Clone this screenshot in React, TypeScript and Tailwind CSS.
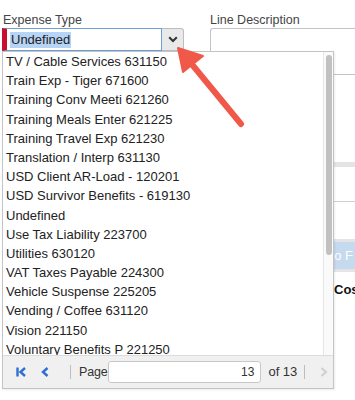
import React from 'react';

const items = [
  'TV / Cable Services 631150',
  'Train Exp - Tiger 671600',
  'Training Conv Meeti 621260',
  'Training Meals Enter 621225',
  'Training Travel Exp 621230',
  'Translation / Interp 631130',
  'USD Client AR-Load - 120201',
  'USD Survivor Benefits - 619130',
  'Undefined',
  'Use Tax Liability 223700',
  'Utilities 630120',
  'VAT Taxes Payable 224300',
  'Vehicle Suspense 225205',
  'Vending / Coffee 631120',
  'Vision 221150',
  'Voluntary Benefits P 221250',
];

function Pager() {
  return (
    <div className="h-[33px] shrink-0 flex items-center whitespace-nowrap bg-[#f0f0f0] border-t border-[#dcdcdc] text-[13px] text-[#333]">
      <button className="ml-[12px] shrink-0 w-[12px] h-[12px] flex items-center justify-center">
        <svg width="11" height="10" viewBox="0 0 11 10">
          <path d="M1.5 0.5 V9.5" stroke="#2f6fd0" strokeWidth="2.4" fill="none" />
          <path d="M9 1 L4.5 5 L9 9" stroke="#2f6fd0" strokeWidth="2.4" fill="none" />
        </svg>
      </button>
      <button className="ml-[13px] shrink-0 w-[10px] h-[12px] flex items-center justify-center">
        <svg width="8" height="10" viewBox="0 0 8 10">
          <path d="M6.5 1 L2 5 L6.5 9" stroke="#2f6fd0" strokeWidth="2.4" fill="none" />
        </svg>
      </button>
      <span className="ml-[20px] shrink-0 w-px h-[14px] bg-[#bdbdbd]" />
      <span className="ml-[8px] shrink-0 text-[12.5px] tracking-[-0.2px]">Page</span>
      <div className="ml-px shrink-0 w-[153px] h-[22px] bg-white border border-[#c8c8c8] rounded-[3px] flex items-center justify-end pr-[6px] text-[12px]">
        13
      </div>
      <span className="ml-[7px] shrink-0">of 13</span>
      <span className="ml-[7px] shrink-0 w-px h-[14px] bg-[#bdbdbd]" />
      <svg className="ml-[15px] shrink-0" width="8" height="10" viewBox="0 0 8 10">
        <path d="M1.5 1 L6 5 L1.5 9" stroke="#cfcfcf" strokeWidth="2" fill="none" />
      </svg>
    </div>
  );
}

export default function App() {
  return (
    <div
      className="relative w-[355px] h-[400px] bg-white overflow-hidden text-[#222]"
      style={{ fontFamily: '"Liberation Sans", Arial, sans-serif' }}
    >
      <div className="flex pt-[13px]">
        {/* Expense Type combo */}
        <div className="ml-[3px] w-[181px]">
          <label className="block text-[12.5px] leading-[14px] text-[#444]">Expense Type</label>
          <div className="mt-px -ml-px flex h-[23px]">
            <div className="flex-1 flex items-center border border-[#6d9fd6] border-l-[5px] border-l-[#c8102e] bg-white">
              <span className="ml-[3px] px-px text-[13px] leading-[16px] bg-[#b6d4f5]">Undefined</span>
            </div>
            <button className="w-[22px] flex items-center justify-center bg-[#e9e9e9] border border-l-0 border-[#bdbdbd] rounded-r-[3px]">
              <svg width="10" height="7" viewBox="0 0 10 7">
                <path d="M1.2 1.2 L5 5 L8.8 1.2" stroke="#333" strokeWidth="2" fill="none" />
              </svg>
            </button>
          </div>
        </div>

        {/* Line Description and what sits behind the list */}
        <div className="ml-[26px] flex-1">
          <label className="block text-[12.5px] leading-[14px] text-[#444]">Line Description</label>
          <div className="mt-px h-[47px] border border-[#c4c4c4] border-r-0 rounded-tl-[3px]" />
          <div className="h-[87px]" />
          <div className="h-[5px] bg-[#e4e4e4]" />
          <div className="h-[35px] border-b border-[#d0d0d0]" />
          <div className="h-[37px]" />
          <div className="h-[3px] bg-[#e4e4e4]" />
          <div className="h-[27px] bg-[#c5d9ef] text-white text-[13px] flex items-center justify-end pr-[2px]">to F</div>
          <div className="h-[3px] bg-[#e4e4e4]" />
          <div className="mt-[8px] flex items-center justify-end text-[13px] font-bold text-[#111]">
            <span className="text-[#d0021b] text-[9px] mr-px">*</span>
            <span className="w-[21px] overflow-hidden whitespace-nowrap">Cost</span>
          </div>
        </div>
      </div>

      {/* Dropdown list */}
      <div className="absolute left-[2px] top-[51px] w-[332px] h-[338px] bg-white border border-[#c4c4c4] flex flex-col shadow-[1px_1px_2px_rgba(0,0,0,0.08)]">
        <div className="relative flex-1 overflow-hidden">
          <ul className="pr-[12px]">
            {items.map((it) => (
              <li key={it} className="h-[19.2px] leading-[19.2px] pl-[3px] text-[13px] text-[#222] whitespace-nowrap">
                {it}
              </li>
            ))}
          </ul>
          <div className="absolute right-0 top-0 bottom-0 w-[10px] bg-[#fafafa] border-l border-[#e6e6e6]">
            <div className="absolute left-[2px] top-[3px] w-[6px] h-[200px] rounded-[3px] bg-[#c1c1c1]" />
          </div>
        </div>
        <Pager />
      </div>

      {/* Callout arrow */}
      <svg className="absolute left-0 top-0 pointer-events-none" width="355" height="400">
        <line x1="241" y1="124" x2="190" y2="62" stroke="#f0584a" strokeWidth="6" strokeLinecap="round" />
        <polygon points="178,48 183,72 203,56" fill="#f0584a" stroke="#f0584a" strokeWidth="2" strokeLinejoin="round" />
      </svg>
    </div>
  );
}
